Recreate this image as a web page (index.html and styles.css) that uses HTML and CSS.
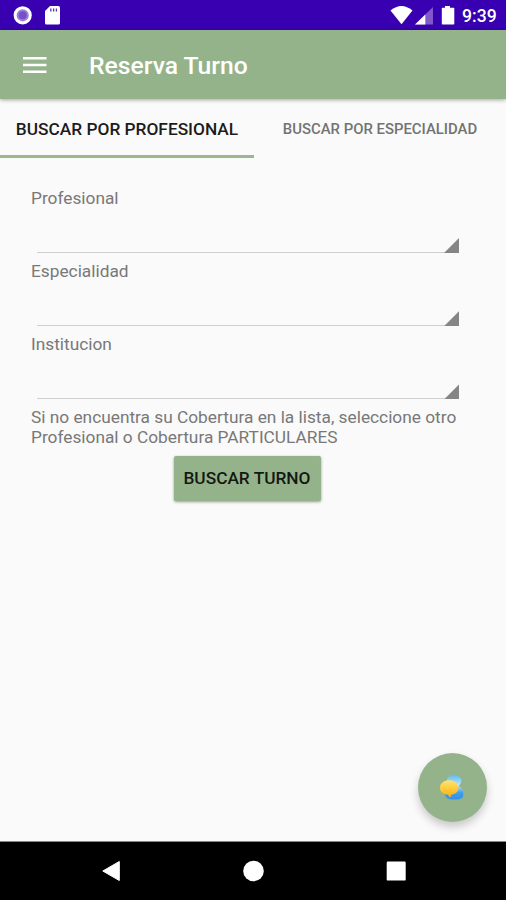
FILE: index.html
```html
<!DOCTYPE html>
<html lang="es">
<head>
<meta charset="utf-8">
<title>Reserva Turno</title>
<link rel="stylesheet" href="styles.css">
</head>
<body>
<div class="screen">
  <header class="status">
    <svg width="60" height="30" viewBox="0 0 60 30">
      <circle cx="22.7" cy="15.3" r="7.6" fill="#9a80d6" stroke="#fff" stroke-width="3"/>
      <circle cx="22.7" cy="15.3" r="4" fill="#7650c8"/>
      <path d="M50 6H58.300Q60 6 60 7.700V23Q60 24.500 58.300 24.500H46.500Q45 24.500 45 23V11Z" fill="#fff"/>
      <path d="M50.800 8.500v3M53.600 8.500v3M56.400 8.500v3" stroke="#5432b5" stroke-width="1.300"/>
    </svg>
    <svg class="status-right" width="66" height="30" viewBox="0 0 66 30">
      <path d="M.5 10.500Q11.500 1.500 22.500 10.500L11.500 24.200Z" fill="#fff"/>
      <path d="M43 7V24.500H25Z" fill="#8058cc"/>
      <path d="M35.300 14.500V24.500H25Z" fill="#fff"/>
      <path d="M55 6h5v1.800h3.500q.8 0 .8.800V23.700q0 .8-.8.800H52.600q-.8 0-.8-.8V8.600q0-.8.8-.8H55Z" fill="#fff"/>
    </svg>
    <span class="clock">9:39</span>
  </header>
  <div class="toolbar">
    <svg width="24" height="18" viewBox="0 0 24 18"><path d="M0 2.300h23.500M0 9h23.500M0 15.700h23.500" stroke="#fff" stroke-width="2.500"/></svg>
    <h1>Reserva Turno</h1>
  </div>
  <nav class="tabs">
    <div class="tab active"><span>BUSCAR POR PROFESIONAL</span></div>
    <div class="tab"><span>BUSCAR POR ESPECIALIDAD</span></div>
  </nav>
  <main class="form">
    <div class="field"><label>Profesional</label><div class="spinner"></div></div>
    <div class="field"><label>Especialidad</label><div class="spinner"></div></div>
    <div class="field"><label>Institucion</label><div class="spinner"></div></div>
    <p class="hint">Si no encuentra su Cobertura en la lista, seleccione otro<br>Profesional o Cobertura PARTICULARES</p>
    <button class="submit">BUSCAR TURNO</button>
  </main>
  <button class="fab" aria-label="Chat">
    <svg width="26" height="28" viewBox="0 0 26 28">
      <defs>
        <linearGradient id="sky" x2="0" y2="1"><stop stop-color="#5bb9e9"/><stop offset="1" stop-color="#d2f1ff"/></linearGradient>
        <linearGradient id="blue" x2="0" y2="1"><stop stop-color="#b9e0f8"/><stop offset=".5" stop-color="#459fea"/><stop offset="1" stop-color="#2d8fe8"/></linearGradient>
        <linearGradient id="gold" x2="0" y2="1"><stop stop-color="#ffe270"/><stop offset=".6" stop-color="#ffc52e"/><stop offset="1" stop-color="#f5a51a"/></linearGradient>
      </defs>
      <ellipse cx="16" cy="8" rx="7.300" ry="6.500" fill="url(#sky)"/>
      <path d="M17 12.500C22 12 25.500 16 25.300 21C26 25 22 26.800 17 26.500C11 27 7 25 7 21Z" fill="url(#blue)"/>
      <path d="M11 7.300C16.500 7.300 20.500 10.500 20.500 14.700C20.500 18.500 17.500 21 13.700 21.500L12 25L9.800 21.600C5 21.300 2 18.600 2 14.700C2 10.500 5.800 7.300 11 7.300Z" fill="url(#gold)"/>
    </svg>
  </button>
  <footer class="navbar">
    <svg width="22" height="22" viewBox="0 0 22 22"><path d="M2.800 11L19.300 1.500V20.500Z" fill="#fff" stroke="#fff" stroke-linejoin="round"/></svg>
    <svg width="22" height="22" viewBox="0 0 22 22"><circle cx="11.500" cy="11" r="10.300" fill="#fff"/></svg>
    <svg width="22" height="22" viewBox="0 0 22 22"><rect x="1.700" y="1.600" width="19" height="19" rx="1.200" fill="#fff"/></svg>
  </footer>
</div>
</body>
</html>
```
FILE: styles.css
```css
* { box-sizing: border-box; }
body { margin: 0; font-family: Roboto, sans-serif; background: #fafafa; }
button { border: 0; font-family: inherit; }
svg { display: block; flex: none; }
.screen { position: relative; width: 506px; height: 900px; display: flex; flex-direction: column; overflow: hidden; }
.status { height: 30px; flex: none; display: flex; align-items: center; background: #3800b0; color: #fff; }
.status-right { margin: 0 6px 0 auto; }
.clock { width: 44px; font-size: 17.6px; font-weight: 500; line-height: 30px; padding-top: 2px; }
.toolbar { height: 69px; flex: none; display: flex; align-items: center; gap: 42px; padding-left: 23px; background: #95b38a; box-shadow: 0 1px 4px rgba(0,0,0,.35); color: #fff; }
.toolbar h1 { margin: 2px 0 0; font-size: 24.7px; line-height: 30px; font-weight: 500; white-space: nowrap; }
.tabs { height: 59px; flex: none; display: flex; }
.tab { width: 252px; display: flex; align-items: center; justify-content: center; font-weight: 500; font-size: 14.9px; color: #737373; white-space: nowrap; border-bottom: 3px solid transparent; padding-top: 4px; }
.tab.active { width: 254px; color: #1c1c1c; font-size: 17.3px; border-color: #9ab78f; }
.form { flex: 1; display: flex; flex-direction: column; padding: 29px 31px 0; }
.field { height: 73.2px; flex: none; }
.field label { display: block; height: 22px; font-size: 17.3px; line-height: 22px; color: #787878; }
.spinner { height: 44px; margin: 0 16px 0 6px; border-bottom: 1px solid #cfcfcf; display: flex; justify-content: flex-end; align-items: flex-end; }
.spinner::after { content: ""; width: 15px; height: 15px; margin-bottom: -1px; background: #858585; clip-path: polygon(100% 0, 100% 100%, 0 100%); }
.hint { margin: 0; font-size: 17.3px; line-height: 20px; color: #787878; white-space: nowrap; }
.submit { align-self: center; width: 147px; height: 45px; margin: 9px 12px 0 0; padding: 0; border-radius: 2px; background: #95b38a; box-shadow: 0 1px 3px rgba(0,0,0,.4); color: #141814; font-size: 17.3px; font-weight: 500; }
.fab { position: absolute; left: 418px; top: 753px; width: 69px; height: 69px; border-radius: 50%; padding: 0 3px 2px 0; display: flex; align-items: center; justify-content: center; background: #95b38a; box-shadow: 0 5px 8px rgba(0,0,0,.2); }
.navbar { height: 59px; flex: none; display: flex; align-items: center; justify-content: center; gap: 120.500px; background: #000; border-top: 1px solid #888; }
```
